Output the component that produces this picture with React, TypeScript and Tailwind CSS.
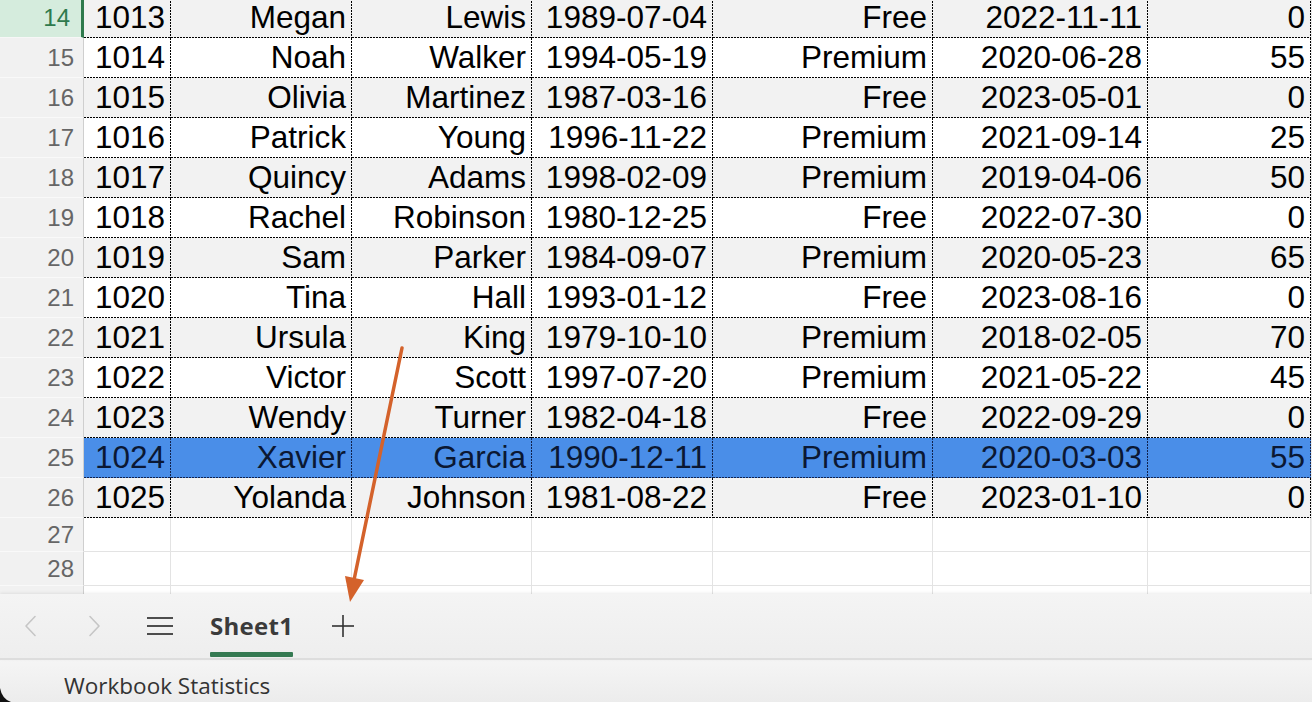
import React from "react";

type Row = { n: number; cells: string[] };

const data: Row[] = [
  { n: 14, cells: ["1013", "Megan", "Lewis", "1989-07-04", "Free", "2022-11-11", "0"] },
  { n: 15, cells: ["1014", "Noah", "Walker", "1994-05-19", "Premium", "2020-06-28", "55"] },
  { n: 16, cells: ["1015", "Olivia", "Martinez", "1987-03-16", "Free", "2023-05-01", "0"] },
  { n: 17, cells: ["1016", "Patrick", "Young", "1996-11-22", "Premium", "2021-09-14", "25"] },
  { n: 18, cells: ["1017", "Quincy", "Adams", "1998-02-09", "Premium", "2019-04-06", "50"] },
  { n: 19, cells: ["1018", "Rachel", "Robinson", "1980-12-25", "Free", "2022-07-30", "0"] },
  { n: 20, cells: ["1019", "Sam", "Parker", "1984-09-07", "Premium", "2020-05-23", "65"] },
  { n: 21, cells: ["1020", "Tina", "Hall", "1993-01-12", "Free", "2023-08-16", "0"] },
  { n: 22, cells: ["1021", "Ursula", "King", "1979-10-10", "Premium", "2018-02-05", "70"] },
  { n: 23, cells: ["1022", "Victor", "Scott", "1997-07-20", "Premium", "2021-05-22", "45"] },
  { n: 24, cells: ["1023", "Wendy", "Turner", "1982-04-18", "Free", "2022-09-29", "0"] },
  { n: 25, cells: ["1024", "Xavier", "Garcia", "1990-12-11", "Premium", "2020-03-03", "55"] },
  { n: 26, cells: ["1025", "Yolanda", "Johnson", "1981-08-22", "Free", "2023-01-10", "0"] },
];

const gridCols = "grid grid-cols-[84px_87px_181px_180px_181px_220px_215px_163px]";

const dotsBlack =
  "[background-image:repeating-linear-gradient(to_right,#000_0_2px,transparent_2px_3px),repeating-linear-gradient(to_bottom,#000_0_2px,transparent_2px_3px)] [background-size:100%_1px,1px_100%] [background-position:0_100%,100%_0] bg-no-repeat";
const dotsNavy =
  "[background-image:repeating-linear-gradient(to_right,#10224d_0_2px,transparent_2px_3px),repeating-linear-gradient(to_bottom,#10224d_0_2px,transparent_2px_3px)] [background-size:100%_1px,1px_100%] [background-position:0_100%,100%_0] bg-no-repeat";

function RowHeader({ n, active, h }: { n: number; active?: boolean; h: string }) {
  if (active) {
    return (
      <div
        className={`${h} flex items-center justify-end pr-[11px] bg-[#d5ecdd] border-r-[3px] border-r-[#2f7a4d] border-b border-b-[#f7f7f7] text-[#2f7a4d] text-[24px]`}
      >
        {n}
      </div>
    );
  }
  return (
    <div
      className={`${h} flex items-center justify-end pr-[9px] bg-[#f1f1f1] border-r border-r-[#cfcfcf] border-b border-b-[#f9f9f9] text-[#666666] text-[24px]`}
    >
      {n}
    </div>
  );
}

function DataRow({ row }: { row: Row }) {
  const selected = row.n === 25;
  const gray = row.n % 2 === 0;
  const bg = selected ? "bg-[#4a8ee8]" : gray ? "bg-[#f2f2f2]" : "bg-white";
  const dots = selected ? dotsNavy : dotsBlack;
  const text = selected ? "text-[#0b1833]" : "text-black";
  return (
    <div className={gridCols}>
      <RowHeader n={row.n} active={row.n === 14} h="h-[40px]" />
      {row.cells.map((c, i) => (
        <div
          key={i}
          className={`h-[40px] flex items-center justify-end pr-[6px] ${dots} ${bg} ${text} text-[31.5px] leading-none`}
        >
          {c}
        </div>
      ))}
    </div>
  );
}

function EmptyRow({ n, h }: { n: number; h: string }) {
  return (
    <div className={gridCols}>
      <RowHeader n={n} h={h} />
      {Array.from({ length: 7 }).map((_, i) => (
        <div key={i} className={`${h} bg-white border-r border-b border-[#e3e3e3]`} />
      ))}
    </div>
  );
}

export default function App() {
  return (
    <div
      className="relative w-[1312px] h-[702px] overflow-hidden bg-white flex flex-col"
      style={{ fontFamily: '"Liberation Sans", Arial, sans-serif' }}
    >
      <div className="h-[594px] overflow-hidden bg-[#ececec] shrink-0">
        <div className="-mt-[2px]">
          {data.map((r) => (
            <DataRow key={r.n} row={r} />
          ))}
          <EmptyRow n={27} h="h-[34px]" />
          <EmptyRow n={28} h="h-[34px]" />
          <EmptyRow n={29} h="h-[34px]" />
        </div>
      </div>

      <div
        className="relative z-10 h-[66px] shrink-0 flex items-stretch bg-gradient-to-b from-[#f4f4f4] to-[#eeeeee] border-b-2 border-[#dddddd] shadow-[0_-1px_3px_rgba(0,0,0,0.08)]"
        style={{ fontFamily: '"Open Sans", "Noto Sans", sans-serif' }}
      >
        <div className="w-[62px] flex items-center justify-center">
          <svg width="14" height="22" viewBox="0 0 14 22" fill="none">
            <polyline points="11,1.5 2,11 11,20.5" stroke="#c6c6c6" strokeWidth="1.6" strokeLinecap="round" strokeLinejoin="round" />
          </svg>
        </div>
        <div className="w-[64px] flex items-center justify-center">
          <svg width="14" height="22" viewBox="0 0 14 22" fill="none">
            <polyline points="3,1.5 12,11 3,20.5" stroke="#c6c6c6" strokeWidth="1.6" strokeLinecap="round" strokeLinejoin="round" />
          </svg>
        </div>
        <div className="w-[68px] flex items-center justify-center">
          <svg width="28" height="20" viewBox="0 0 28 20" fill="none">
            <line x1="1" y1="2" x2="27" y2="2" stroke="#3a3a3a" strokeWidth="1.8" />
            <line x1="1" y1="10" x2="27" y2="10" stroke="#3a3a3a" strokeWidth="1.8" />
            <line x1="1" y1="18" x2="27" y2="18" stroke="#3a3a3a" strokeWidth="1.8" />
          </svg>
        </div>
        <div className="ml-[16px] flex flex-col">
          <div className="mt-[17px] leading-[30px] text-[24px] font-bold text-[#3b3b3b] tracking-[0.3px]">Sheet1</div>
          <div className="mt-auto mb-[1px] h-[5px] bg-[#357a52] rounded-[1px]" />
        </div>
        <div className="ml-[38px] flex items-center">
          <svg width="24" height="24" viewBox="0 0 24 24" fill="none">
            <line x1="12" y1="1" x2="12" y2="23" stroke="#333333" strokeWidth="1.6" />
            <line x1="1" y1="12" x2="23" y2="12" stroke="#333333" strokeWidth="1.6" />
          </svg>
        </div>
      </div>

      <div
        className="h-[42px] shrink-0 bg-gradient-to-b from-[#f5f5f5] to-[#ececec] pl-[64px] pt-[12px]"
        style={{ fontFamily: '"Open Sans", "Noto Sans", sans-serif' }}
      >
        <div className="text-[22.5px] leading-[28px] text-[#333333]">Workbook Statistics</div>
      </div>

      <svg className="absolute inset-0 pointer-events-none z-20" width="1312" height="702" viewBox="0 0 1312 702">
        <line x1="402" y1="348" x2="354" y2="580" stroke="#d4622b" strokeWidth="3.5" strokeLinecap="round" />
        <polygon points="350,602 345,576 364,580" fill="#d4622b" />
        <path d="M0 688 Q2 699 11 702 L0 702 Z" fill="#111111" />
      </svg>
    </div>
  );
}
